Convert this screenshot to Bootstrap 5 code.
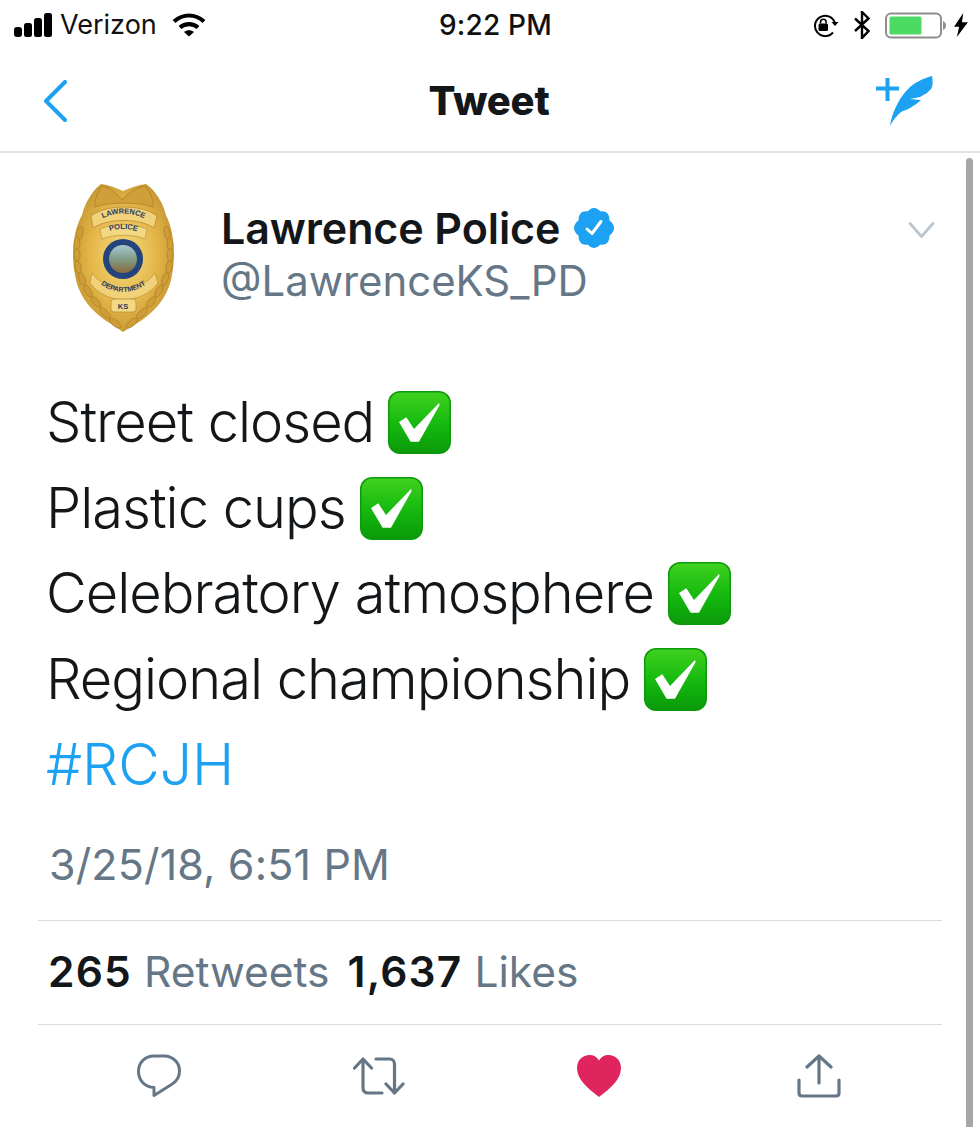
<!DOCTYPE html>
<html lang="en">
<head>
    <meta charset="UTF-8">
    <meta name="viewport" content="width=device-width, initial-scale=1.0">
    <title>Tweet</title>
    <link href="https://cdn.jsdelivr.net/npm/bootstrap@5.3.0/dist/css/bootstrap.min.css" rel="stylesheet">
    <style>
        html, body { height: 1127px; overflow: hidden; }
        body { background: #fff; font-family: Inter, "Liberation Sans", sans-serif; color: #14171a; }
        .phone { position: relative; height: 1127px; overflow: hidden; }
        .status-bar { height: 50px; padding: 0 12px 0 14px; font-size: 27px; color: #111; }
        .status-left { width: 349px; }
        .status-right { width: 340px; }
        .status-time { font-weight: 500; font-size: 28px; letter-spacing: .2px; }
        .status-gap { margin-left: 15px; }
        .carrier { margin-left: 7px; margin-right: 15px; }
        .top-bar { height: 103px; border-bottom: 2px solid #dfe1e4; padding: 0 46px 0 44px; }
        .top-side { flex: 1 1 0; }
        .top-title { font-size: 40px; font-weight: 800; letter-spacing: -.2px; }
        .tweet-head { padding: 30px 45px 0 72px; }
        .author { margin-left: 46px; padding-top: 20px; }
        .author-name { font-size: 43px; font-weight: 600; line-height: 50px; letter-spacing: -.1px; }
        .verified { margin-left: 14px; }
        .author-handle { font-size: 41.9px; line-height: 56px; color: #657786; font-weight: 400; }
        .tweet-text { margin-top: 48px; padding-left: 46px; font-size: 56px; font-weight: 300; line-height: 85.5px; letter-spacing: -1px; }
        .tweet-line { height: 85.5px; }
        .check-mark { margin-left: 14px; vertical-align: -12px; }
        .tag { color: #1da1f2; letter-spacing: 0; font-size: 57px; }
        .tweet-date { padding-left: 49px; margin-top: 28px; margin-bottom: 28px; font-size: 43px; line-height: 56px; color: #657786; letter-spacing: .15px; }
        .rule { margin: 0 38px; border-top: 1px solid #d9dde0; }
        .stats { height: 103px; margin-left: 48px; font-size: 42.5px; color: #657786; }
        .stats b { color: #14171a; font-weight: 600; letter-spacing: 1.2px; }
        .stat-item { margin-right: 18px; }
        .actions { padding: 0 51px 0 49px; height: 103px; }
        .action { width: 220px; }
        .scroll-thumb { position: absolute; left: 966px; top: 158px; bottom: 0; width: 7px; background: #a6a6a6; border-radius: 4px 4px 0 0; }
    </style>
</head>
<body>
<div class="phone">
    <div class="status-bar d-flex align-items-center justify-content-between">
        <div class="status-left d-flex align-items-center">
            <svg width="39" height="24" viewBox="0 0 39 24"><g fill="#000"><rect x="0" y="14" width="8" height="10" rx="3"/><rect x="10" y="10" width="8" height="14" rx="2.5"/><rect x="20" y="5" width="8" height="19" rx="2.5"/><rect x="30" y="0" width="8" height="24" rx="2.5"/></g></svg>
            <span class="carrier">Verizon</span>
            <svg width="34" height="24" viewBox="0 0 34 24" fill="none" stroke="#000" stroke-width="4.2"><path d="M2 8.5C11 .5 23 .5 32 8.500"/><path d="M8 14.500C13 10 21 10 26 14.500"/><path d="M12 19 17 23.500 22 19C19 16.500 15 16.500 12 19Z" fill="#000" stroke="none"/></svg>
        </div>
        <div class="status-time">9:22 PM</div>
        <div class="status-right d-flex align-items-center justify-content-end">
            <svg width="27" height="23" viewBox="0 0 27 23" fill="none"><path d="M21 18.500A10.200 10.200 0 1 1 22.800 8.500" stroke="#000" stroke-width="2"/><path d="M19.500 8h7l-3.500 4z" fill="#000"/><rect x="6.500" y="9.500" width="9.500" height="7.500" rx="1.500" fill="#000"/><path d="M8.500 9.500V8a2.800 2.800 0 0 1 5.600 0v1.500" stroke="#000" stroke-width="1.600"/></svg>
            <svg class="status-gap" width="16" height="28" viewBox="0 0 16 28" fill="none" stroke="#000" stroke-width="2.400"><path d="M1 7.500 14.500 20 8 27V1l6.500 6.500L1 20"/></svg>
            <svg class="status-gap" width="61" height="27" viewBox="0 0 61 27" fill="none"><rect x="1" y="1.500" width="55" height="24" rx="5" stroke="#8e8e8e" stroke-width="2"/><rect x="4.500" y="4.500" width="32" height="18" rx="1.500" fill="#4cd964"/><path d="M58 9c2 1 3 2.500 3 4.500s-1 3.500-3 4.500z" fill="#8e8e8e"/></svg>
            <svg class="ms-2" width="14" height="24" viewBox="0 0 15 26"><path d="M10 0 0 15h5.500L3 26 15 10H8.500z" fill="#000"/></svg>
        </div>
    </div>

    <div class="top-bar d-flex align-items-center">
        <div class="top-side d-flex">
            <svg width="24" height="42" viewBox="0 0 24 42" fill="none"><path d="M21 2 2 21l19 19" stroke="#1da1f2" stroke-width="4" stroke-linecap="round" stroke-linejoin="round"/></svg>
        </div>
        <div class="top-title">Tweet</div>
        <div class="top-side d-flex justify-content-end">
            <svg width="60" height="52" viewBox="0 0 60 52"><path d="M2 13.500h23M13.500 3v23" stroke="#1da1f2" stroke-width="4" fill="none"/><path d="M16 51C18 37 26 21 36 12 43 6 51 3 58 1 59 6 59 11 57 14L53 18 46 22 36 24 47 25C44 28 41 30 39 31 35 34 32 35 29 36 25 38 24 40 23 41 20 44 18 47 16 51Z" fill="#1da1f2"/></svg>
        </div>
    </div>

    <div class="tweet-head d-flex align-items-start">
        <svg width="103" height="149" viewBox="0 0 103 149">
            <defs>
                <radialGradient id="gold" cx="50%" cy="48%" r="62%"><stop offset="0" stop-color="#f6dc80"/><stop offset=".55" stop-color="#e3b547"/><stop offset="1" stop-color="#b98a2b"/></radialGradient>
                <linearGradient id="land" x1="0" y1="0" x2="0" y2="1"><stop offset="0" stop-color="#a9c9d3"/><stop offset=".5" stop-color="#7f9c86"/><stop offset="1" stop-color="#8b6a3a"/></linearGradient>
                <path id="arc-top" d="M24 39Q51 22 79 39"/>
                <path id="arc-police" d="M33 50Q51 42 70 50"/>
                <path id="arc-bottom" d="M22 96Q51 122 81 96"/>
                <g id="wreath" fill="#cf9d37" stroke="#a87b24" stroke-width=".6">
                    <ellipse cx="8" cy="50" rx="3" ry="6.500" transform="rotate(10 8 50)"/>
                    <ellipse cx="5" cy="61" rx="3" ry="6.500" transform="rotate(4 5 61)"/>
                    <ellipse cx="5" cy="72" rx="3" ry="6.500"/>
                    <ellipse cx="6" cy="84" rx="3" ry="6.500" transform="rotate(-10 6 84)"/>
                    <ellipse cx="10" cy="96" rx="3" ry="6.500" transform="rotate(-20 10 96)"/>
                    <ellipse cx="16" cy="108" rx="3" ry="6.500" transform="rotate(-30 16 108)"/>
                    <ellipse cx="24" cy="119" rx="3" ry="6.500" transform="rotate(-40 24 119)"/>
                    <ellipse cx="33" cy="130" rx="3" ry="7" transform="rotate(-45 33 130)"/>
                    <ellipse cx="43" cy="140" rx="3" ry="7" transform="rotate(-50 43 140)"/>
                </g>
            </defs>
            <path d="M29 1C37 2 44 5 51 8 58 5 66 2 74 1 84 8 91 20 94 32 102 48 104 72 100 92 96 116 80 132 62 142L51 149 41 142C23 132 7 116 3 92-1 72 1 48 10 32 13 20 20 8 29 1Z" fill="url(#gold)"/>
            <use href="#wreath"/>
            <use href="#wreath" transform="translate(103 0) scale(-1 1)"/>
            <path d="M30 3C38 5 45 10 50 17 56 10 64 5 73 3 79 10 82 18 81 24 70 19 33 19 23 24 22 18 25 10 30 3Z" fill="#cfa03a" stroke="#a87b24" stroke-width=".7"/>
            <path d="M19 33C34 21 70 21 85 33L82 45C68 35 36 35 21 45Z" fill="#f1d27a" stroke="#b58a30" stroke-width=".8"/>
            <path d="M28 46C42 40 61 40 75 46L73 56C60 51 43 51 30 56Z" fill="#f3d884" stroke="#b58a30" stroke-width=".6"/>
            <circle cx="51" cy="76" r="20" fill="#26447c"/>
            <circle cx="51" cy="76" r="14" fill="url(#land)"/>
            <path d="M20 90C34 110 69 110 83 90L86 100C70 122 34 122 18 100Z" fill="#f1d27a" stroke="#b58a30" stroke-width=".6"/>
            <rect x="39" y="116" width="25" height="13" rx="3" fill="#f3d884" stroke="#b58a30" stroke-width=".7"/>
            <g font-family="'Liberation Sans', sans-serif" font-weight="700" fill="#2c3a62" text-anchor="middle">
                <text font-size="7.500"><textPath href="#arc-top" startOffset="50%">LAWRENCE</textPath></text>
                <text font-size="7.500"><textPath href="#arc-police" startOffset="50%">POLICE</textPath></text>
                <text font-size="7"><textPath href="#arc-bottom" startOffset="50%">DEPARTMENT</textPath></text>
                <text x="51" y="126" font-size="7.500">KS</text>
            </g>
        </svg>
        <div class="author flex-grow-1">
            <div class="author-name d-flex align-items-center">Lawrence Police
                <svg class="verified" width="40" height="40" viewBox="0 0 40 40"><path d="M20 0c3 0 5 2 6.500 3.500 2.500-.5 5.500 0 7 2s2 4.500 2 7c2 1.500 4.500 4 4.500 7.500s-2.500 6-4.500 7.500c0 2.500-.5 5-2 7s-4.500 2.500-7 2C25 37.500 23 40 20 40s-5-2.500-6.500-3.500c-2.500.5-5.500 0-7-2s-2-4.500-2-7C2.500 26 0 23.500 0 20s2.500-6 4.500-7.500c0-2.500.5-5 2-7s4.500-2.500 7-2C15 2 17 0 20 0z" fill="#1da1f2"/><path d="M13 21l5 4.500 9-12" fill="none" stroke="#fff" stroke-width="3" stroke-linecap="round" stroke-linejoin="round"/></svg>
            </div>
            <div class="author-handle">@LawrenceKS_PD</div>
        </div>
        <svg class="mt-4 pt-1" width="27" height="43" viewBox="0 0 27 18" fill="none"><path d="M2 2l11.500 13L25 2" stroke="#bcc6ce" stroke-width="2.800" stroke-linecap="round" stroke-linejoin="round"/></svg>
    </div>

    <div class="tweet-text">
        <div class="tweet-line">Street closed<svg class="check-mark" width="63" height="63" viewBox="0 0 63 63"><use href="#green-check"/></svg></div>
        <div class="tweet-line">Plastic cups<svg class="check-mark" width="63" height="63" viewBox="0 0 63 63"><use href="#green-check"/></svg></div>
        <div class="tweet-line">Celebratory atmosphere<svg class="check-mark" width="63" height="63" viewBox="0 0 63 63"><use href="#green-check"/></svg></div>
        <div class="tweet-line">Regional championship<svg class="check-mark" width="63" height="63" viewBox="0 0 63 63"><use href="#green-check"/></svg></div>
        <div class="tweet-line tag">#RCJH</div>
    </div>

    <div class="tweet-date">3/25/18, 6:51 PM</div>
    <div class="rule"></div>
    <div class="stats d-flex align-items-center">
        <span class="stat-item"><b>265</b> Retweets</span>
        <span><b>1,637</b> Likes</span>
    </div>
    <div class="rule"></div>
    <div class="actions d-flex align-items-center">
        <div class="action d-flex justify-content-center">
            <svg width="44" height="44" viewBox="0 0 44 44" fill="none"><path d="M17 2h10c9 0 15.500 6.500 15.500 15 0 6-3 10.500-8 13.500L17 41.500V33.500C8 33 1.500 26.500 1.500 17.500 1.500 8.500 8 2 17 2z" stroke="#657786" stroke-width="3" stroke-linejoin="round"/></svg>
        </div>
        <div class="action d-flex justify-content-center">
            <svg width="52" height="38" viewBox="0 0 52 38" fill="none" stroke="#657786" stroke-width="3.200" stroke-linecap="round" stroke-linejoin="round"><path d="M1.500 11 10 2l8.500 9M10 3v28c0 3 2 5 5 5h14"/><path d="M50 27l-8.500 9-8.500-9M41.500 35V7c0-3-2-5-5-5H23"/></svg>
        </div>
        <div class="action d-flex justify-content-center">
            <svg width="44" height="42" viewBox="0 0 44 42"><path d="M22 42C10 33 0 24 0 13 0 5 6 0 12.500 0 17 0 20 2 22 5.500 24 2 27 0 31.500 0 38 0 44 5 44 13 44 24 34 33 22 42z" fill="#e0245e"/></svg>
        </div>
        <div class="action d-flex justify-content-center">
            <svg width="44" height="44" viewBox="0 0 44 44" fill="none" stroke="#657786" stroke-width="3.200" stroke-linecap="round" stroke-linejoin="round"><path d="M10 13 22 2l12 11M22 3v26"/><path d="M2 26v13c0 2 1 3 3 3h34c2 0 3-1 3-3V26"/></svg>
        </div>
    </div>
    <div class="scroll-thumb"></div>
</div>

<svg width="0" height="0" class="position-absolute">
    <defs>
        <linearGradient id="green-fill" x1="0" y1="0" x2="0" y2="1"><stop offset="0" stop-color="#3fd11f"/><stop offset=".55" stop-color="#14b80f"/><stop offset="1" stop-color="#0b9a0a"/></linearGradient>
        <g id="green-check">
            <rect x="0" y="0" width="63" height="63" rx="12" fill="#0c9a0c"/>
            <rect x="1.500" y="1.500" width="60" height="60" rx="11" fill="url(#green-fill)"/>
            <path d="M11 31 18.300 26.300 26 38 51 12 51.600 14 31 50.700H22.600Z" fill="#fff"/>
        </g>
    </defs>
</svg>

<script src="https://cdn.jsdelivr.net/npm/bootstrap@5.3.0/dist/js/bootstrap.bundle.min.js"></script>
</body>
</html>
